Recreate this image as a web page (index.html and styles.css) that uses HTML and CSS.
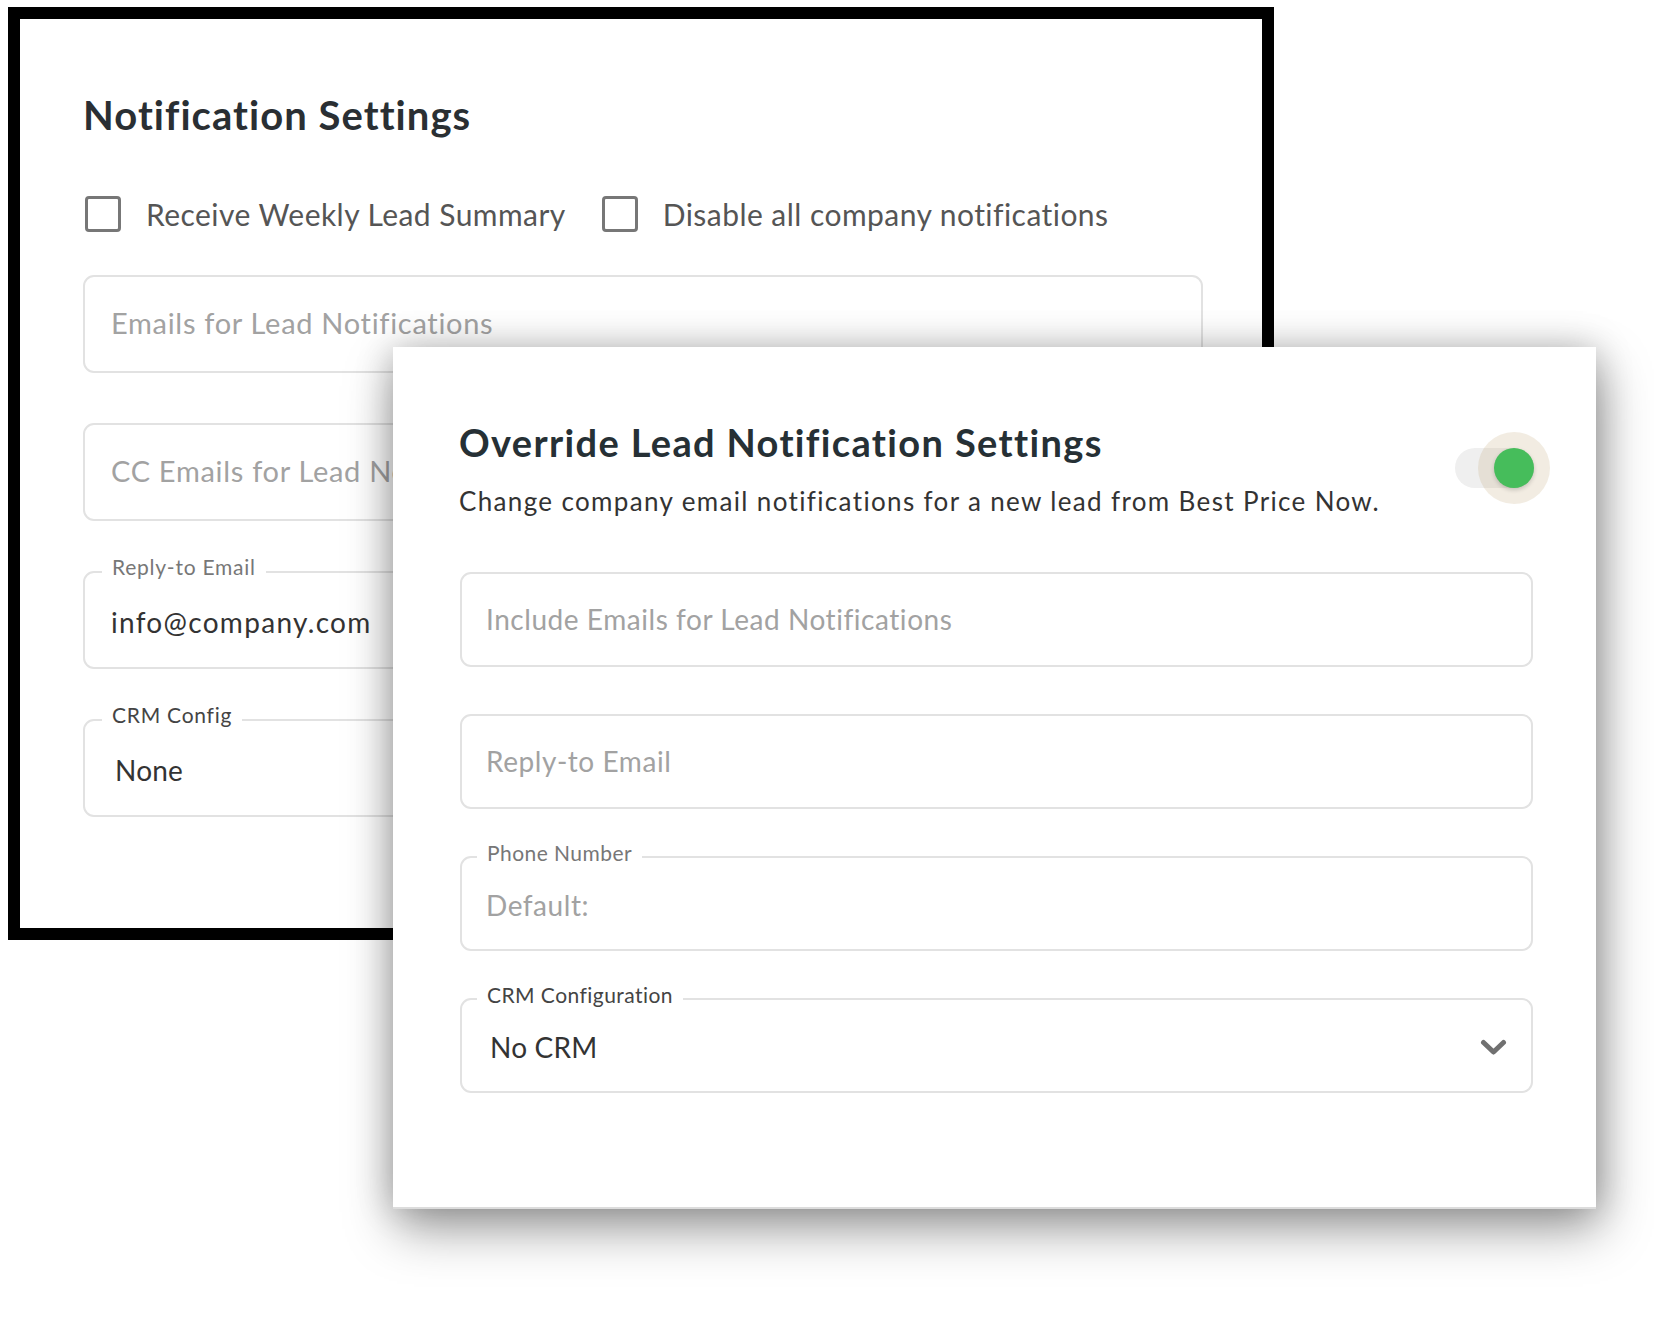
FILE: index.html
```html
<!DOCTYPE html>
<html lang="en">
<head>
<meta charset="utf-8">
<title>Notification Settings</title>
<link rel="stylesheet" href="styles.css">
</head>
<body>
<div class="stage">
  <section class="panel">
    <h1 class="panel-title">Notification Settings</h1>
    <div class="checks">
      <label class="check"><span class="box"></span><span class="check-text">Receive Weekly Lead Summary</span></label>
      <label class="check"><span class="box"></span><span class="check-text">Disable all company notifications</span></label>
    </div>
    <div class="fields back-fields">
      <div class="field"><span class="ph">Emails for Lead Notifications</span></div>
      <div class="field"><span class="ph">CC Emails for Lead Notifications</span></div>
      <div class="field labeled"><span class="legend soft">Reply-to Email</span><span class="val val-mail">info@company.com</span></div>
      <div class="field labeled"><span class="legend">CRM Config</span><span class="val val-sel">None</span></div>
    </div>
  </section>

  <section class="modal">
    <div class="toggle">
      <span class="track"></span>
      <span class="halo"></span>
      <span class="knob"></span>
    </div>
    <h2 class="modal-title">Override Lead Notification Settings</h2>
    <p class="modal-sub">Change company email notifications for a new lead from Best Price Now.</p>
    <div class="fields modal-fields">
      <div class="field"><span class="ph">Include Emails for Lead Notifications</span></div>
      <div class="field"><span class="ph">Reply-to Email</span></div>
      <div class="field labeled"><span class="legend soft">Phone Number</span><span class="ph">Default:</span></div>
      <div class="field labeled select"><span class="legend">CRM Configuration</span><span class="val val-sel">No CRM</span>
        <svg class="chev" width="27" height="17" viewBox="0 0 27 17"><polyline points="3.5,3.5 13.5,13 23.5,3.5" fill="none" stroke="#707070" stroke-width="5" stroke-linecap="round" stroke-linejoin="round"/></svg>
      </div>
    </div>
  </section>
</div>
</body>
</html>
```

FILE: styles.css
```css
* { box-sizing: border-box; }

html, body {
  margin: 0;
  padding: 0;
  background: #ffffff;
}

body {
  font-family: "Lato", "Open Sans", sans-serif;
  color: #333333;
}

.stage {
  position: relative;
  width: 1654px;
  height: 1322px;
  overflow: hidden;
  padding: 7px 0 0 8px;
}

/* ---------- back panel ---------- */
.panel {
  width: 1266px;
  height: 933px;
  border: 12px solid #000000;
  background: #ffffff;
  padding: 72px 59px 0 63px;
}

.panel-title {
  margin: 0;
  font-size: 40px;
  line-height: 48px;
  font-weight: 700;
  color: #2a2f33;
  letter-spacing: 1.05px;
}

.checks {
  display: flex;
  align-items: center;
  margin-top: 57px;
  height: 36px;
}

.check {
  display: flex;
  align-items: center;
  margin-right: 36px;
}

.box {
  width: 36px;
  height: 36px;
  border: 3px solid #777777;
  border-radius: 4px;
  margin-left: 2px;
  margin-right: 25px;
  flex: none;
}

.check + .check .box { margin-left: 0; }

.check-text {
  font-size: 30px;
  line-height: 36px;
  color: #555555;
  letter-spacing: 0.45px;
}

/* ---------- fields ---------- */
.fields {
  display: flex;
  flex-direction: column;
}

.back-fields {
  margin-top: 43px;
  gap: 50px;
}

.field {
  position: relative;
  display: flex;
  align-items: center;
  border: 2px solid #e2e2e2;
  border-radius: 11px;
  padding: 0 27px 2px 27px;
  background: #ffffff;
}

.back-fields .field { height: 98px; padding-left: 26px; }

.modal-fields .field { padding-left: 24px; }

.field.labeled { padding-top: 5px; }

.ph {
  font-size: 28px;
  line-height: 34px;
  color: #a2a2a2;
  letter-spacing: 0.55px;
}

.back-fields .ph {
  font-size: 29px;
  letter-spacing: 0.7px;
}

.val {
  font-size: 28px;
  line-height: 34px;
  color: #333333;
  letter-spacing: 0.2px;
}

.val-mail { letter-spacing: 1.3px; }

.val-sel { padding-left: 4px; }

.legend {
  position: absolute;
  left: 15px;
  top: -18px;
  padding: 0 10px;
  background: #ffffff;
  font-size: 21px;
  line-height: 26px;
  color: #444444;
  letter-spacing: 0.45px;
}

.legend.soft { color: #777777; }

.back-fields .legend { left: 17px; top: -19px; letter-spacing: 0.75px; }

/* ---------- modal ---------- */
.modal {
  position: absolute;
  left: 393px;
  top: 347px;
  width: 1203px;
  height: 860px;
  background: #ffffff;
  padding: 72px 63px 0 66px;
  box-shadow: 0 2px 0 #dcdcdc, 4px 22px 48px rgba(0, 0, 0, 0.38), 0 0 34px rgba(0, 0, 0, 0.22);
}

.modal-title {
  margin: 0;
  font-size: 38px;
  line-height: 46px;
  font-weight: 700;
  color: #263035;
  letter-spacing: 1.35px;
}

.modal-sub {
  margin: 21px 0 0 0;
  font-size: 26px;
  line-height: 31px;
  color: #333333;
  letter-spacing: 1.35px;
}

.modal-fields {
  margin-top: 55px;
  margin-left: 1px;
  gap: 47px;
}

.modal-fields .field { height: 95px; }

.select { justify-content: space-between; }

.chev {
  display: block;
  margin-right: -3px;
}

/* ---------- toggle ---------- */
.toggle {
  position: absolute;
  top: 101px;
  right: 62px;
  width: 79px;
  height: 40px;
}

.track {
  position: absolute;
  inset: 0;
  border-radius: 20px;
  background: #efefef;
}

.halo {
  position: absolute;
  right: -16px;
  top: -16px;
  width: 72px;
  height: 72px;
  border-radius: 50%;
  background: rgba(190, 160, 110, 0.2);
}

.knob {
  position: absolute;
  right: 0;
  top: 0;
  width: 40px;
  height: 40px;
  border-radius: 50%;
  background: #46bd5b;
  box-shadow: 0 2px 4px rgba(0, 0, 0, 0.18);
}
```
